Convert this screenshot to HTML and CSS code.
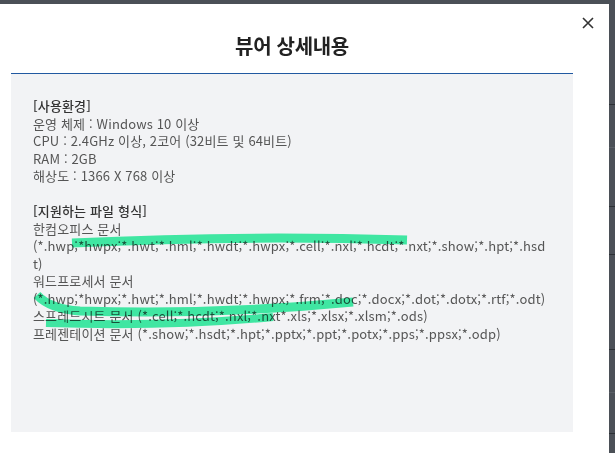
FILE: index.html
```html
<!DOCTYPE html>
<html lang="ko">
<head>
<meta charset="utf-8">
<title>뷰어 상세내용</title>
<link rel="stylesheet" href="styles.css">
</head>
<body>
<div class="page">
  <div class="modal">
    <button class="close" aria-label="닫기">
      <svg width="12" height="12" viewBox="0 0 12 12"><path d="M1 1L11 11M11 1L1 11" stroke="#333" stroke-width="1.6" fill="none"/></svg>
    </button>
    <h1 class="title">뷰어 상세내용</h1>
    <div class="box">
      <p class="group">
        <strong>[사용환경]</strong><br>
        운영 체제 : Windows 10 이상<br>
        CPU : 2.4GHz 이상, 2코어 (32비트 및 64비트)<br>
        RAM : 2GB<br>
        해상도 : 1366 X 768 이상
      </p>
      <p class="group">
        <strong>[지원하는 파일 형식]</strong><br>
        한컴오피스 문서<br>
        (*.hwp;*hwpx;*.hwt;*.hml;*.hwdt;*.hwpx;*.cell;*.nxl;*.hcdt;*.nxt;*.show;*.hpt;*.hsd<br>t)<br>
        워드프로세서 문서<br>
        (*.hwp;*hwpx;*.hwt;*.hml;*.hwdt;*.hwpx;*.frm;*.doc;*.docx;*.dot;*.dotx;*.rtf;*.odt)<br>
        스프레드시트 문서 (*.cell;*.hcdt;*.nxl;*.nxt*.xls;*.xlsx;*.xlsm;*.ods)<br>
        프레젠테이션 문서 (*.show;*.hsdt;*.hpt;*.pptx;*.ppt;*.potx;*.pps;*.ppsx;*.odp)
      </p>
    </div>
  </div>
  <div class="strip"></div>
</div>
<svg class="marks" width="615" height="453" viewBox="0 0 615 453">
  <path d="M72 243 Q240 235 407 240" />
  <path d="M37 295 Q50 309 80 311 Q220 315 353 302" />
  <path d="M46 323 Q170 327 273 317" class="thin" />
</svg>
</body>
</html>
```
FILE: styles.css
```css
html, body {
  margin: 0;
  padding: 0;
}
body {
  width: 615px;
  height: 453px;
  overflow: hidden;
  background: #4b5057;
  font-family: "Noto Sans CJK KR", "Noto Sans", sans-serif;
  position: relative;
}
.page {
  display: flex;
  align-items: flex-start;
  height: 453px;
}
.modal {
  position: relative;
  box-sizing: border-box;
  width: 609px;
  height: 449px;
  margin-top: 4px;
  background: #fff;
  padding: 28px 36px 0 11px;
}
.close {
  position: absolute;
  top: 9px;
  right: 11px;
  width: 20px;
  height: 20px;
  padding: 0;
  border: 0;
  background: transparent;
  display: flex;
  align-items: center;
  justify-content: center;
}
.title {
  margin: 0;
  font-size: 20px;
  line-height: 28px;
  font-weight: 700;
  color: #222;
  text-align: center;
  letter-spacing: -0.3px;
}
.box {
  margin-top: 13px;
  height: 359px;
  box-sizing: border-box;
  background: #f2f3f5;
  border-top: 1px solid #2159a1;
  padding: 23px 8px 0 22px;
  font-size: 13px;
  line-height: 17.5px;
  letter-spacing: 0.15px;
  color: #555;
}
.group {
  margin: 0 0 17.5px;
  white-space: nowrap;
}
.group strong {
  font-weight: 500;
  color: #333;
}
.strip {
  flex: 1;
  height: 453px;
  background:
    linear-gradient(#2c3035, #2c3035) 0 104px / 100% 1px no-repeat,
    linear-gradient(#5a5f66, #5a5f66) 0 147px / 100% 1px no-repeat,
    linear-gradient(#2c3035, #2c3035) 0 206px / 100% 1px no-repeat,
    linear-gradient(#2c3035, #2c3035) 0 254px / 100% 1px no-repeat,
    linear-gradient(#2c3035, #2c3035) 0 349px / 100% 1px no-repeat,
    linear-gradient(#5a5f66, #5a5f66) 0 392px / 100% 1px no-repeat,
    linear-gradient(#2c3035, #2c3035) 0 433px / 100% 1px no-repeat,
    #4b5057;
}
.marks {
  position: absolute;
  top: 0;
  left: 0;
  pointer-events: none;
  mix-blend-mode: multiply;
}
.marks path {
  fill: none;
  stroke: #22f09a;
  stroke-width: 9;
  stroke-linecap: butt;
  opacity: 0.85;
}
.marks path.thin {
  stroke-width: 8;
}
```
